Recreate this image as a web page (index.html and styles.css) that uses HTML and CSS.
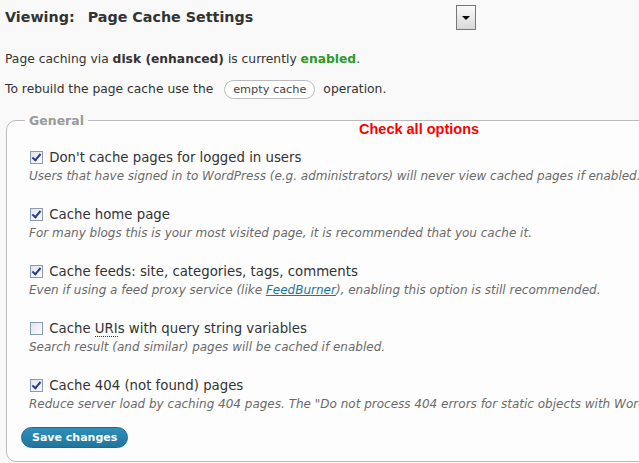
FILE: index.html
```html
<!DOCTYPE html>
<html lang="en">
<head>
  <meta charset="UTF-8">
  <title>Page Cache Settings</title>
  <link rel="stylesheet" href="styles.css">
</head>
<body>
  <div class="viewing">
    <h2>Viewing:<span class="sp"></span>Page Cache Settings</h2>
    <span class="picker"><span class="arrow"></span></span>
  </div>

  <p class="status">Page caching via <strong>disk (enhanced)</strong> is currently <strong class="on">enabled</strong>.</p>
  <p class="status">To rebuild the page cache use the <button class="pill">empty cache</button> operation.</p>

  <!-- Opciones generales -->
  <fieldset class="box">
    <legend>General</legend>
    <div class="note">Check all options</div>

    <div class="opt">
      <label><input type="checkbox" checked> Don't cache pages for logged in users</label>
      <span class="desc">Users that have signed in to WordPress (e.g. administrators) will never view cached pages if enabled.</span>
    </div>

    <div class="opt">
      <label><input type="checkbox" checked> Cache home page</label>
      <span class="desc">For many blogs this is your most visited page, it is recommended that you cache it.</span>
    </div>

    <div class="opt">
      <label><input type="checkbox" checked> Cache feeds: site, categories, tags, comments</label>
      <span class="desc">Even if using a feed proxy service (like <a href="#">FeedBurner</a>), enabling this option is still recommended.</span>
    </div>

    <div class="opt">
      <label><input type="checkbox"> Cache <abbr>URI</abbr>s with query string variables</label>
      <span class="desc">Search result (and similar) pages will be cached if enabled.</span>
    </div>

    <div class="opt">
      <label><input type="checkbox" checked> Cache 404 (not found) pages</label>
      <span class="desc">Reduce server load by caching 404 pages. The "Do not process 404 errors for static objects with WordPress" option is recommended.</span>
    </div>

    <button class="save">Save changes</button>
  </fieldset>
</body>
</html>
```

FILE: styles.css
```css
body {
  font-family: "DejaVu Sans", Verdana, sans-serif;
  font-size: 12.3px;
  color: #333;
  background: #f9f9f9;
  margin: 0;
  padding: 0 5px;
  overflow: hidden;
}

.viewing {
  display: flex;
  align-items: flex-start;
  height: 44px;
}

.viewing h2 {
  font-size: 14.3px;
  font-weight: bold;
  margin: 9px 0 0;
  width: 451px;
}

.viewing .sp {
  display: inline-block;
  width: 13px;
}

.picker {
  display: flex;
  align-items: center;
  justify-content: center;
  width: 18px;
  height: 23px;
  margin-top: 5px;
  border: 1px solid #777;
  background: linear-gradient(#fafafa, #d8d8d8);
}

.arrow {
  width: 0;
  height: 0;
  border-left: 4px solid transparent;
  border-right: 4px solid transparent;
  border-top: 4px solid #000;
}

.status {
  margin: 6px 0 12px;
  line-height: 18px;
}

.on {
  color: #2a9a2a;
}

.pill {
  font-family: inherit;
  font-size: 11.3px;
  color: #444;
  background: #fff;
  border: 1px solid #bbb;
  border-radius: 11px;
  padding: 2px 8px;
  margin: 0 4px 0 7px;
}

/* Caja de opciones */
.box {
  width: 700px;
  margin: 14px 0 0 1px;
  padding: 0 0 13px 14px;
  border: 1px solid #bbb;
  border-radius: 10px;
  background: #fdfdfd;
  position: relative;
}

.box legend {
  color: #999;
  font-weight: bold;
  font-size: 12.5px;
  padding: 0 4px;
  margin-left: 4px;
}

.note {
  position: absolute;
  left: 352px;
  top: -7px;
  font-family: "Liberation Sans", Arial, sans-serif;
  font-weight: bold;
  font-size: 14.5px;
  color: #f00;
}

.opt {
  display: flex;
  flex-direction: column;
  margin: 21px 0 0 8px;
}

.opt:first-of-type {
  margin-top: 17px;
}

.opt label {
  font-size: 13.3px;
  line-height: 18px;
}

.opt input {
  appearance: none;
  -webkit-appearance: none;
  position: relative;
  vertical-align: -2px;
  margin: 0 2px 0 1px;
  width: 13px;
  height: 13px;
  border: 1px solid #8c9bb0;
  background: linear-gradient(135deg, #dfe3ea, #fdfdfd);
}

.opt input:checked::before {
  content: "";
  position: absolute;
  left: 3px;
  top: 0;
  width: 3px;
  height: 7px;
  border-right: 2px solid #2a3c8c;
  border-bottom: 2px solid #2a3c8c;
  transform: rotate(40deg);
}

abbr {
  text-decoration: none;
  border-bottom: 1px dotted #333;
}

.desc {
  font-style: italic;
  font-size: 12px;
  color: #6a6a6a;
  white-space: nowrap;
  line-height: 18px;
}

.desc a {
  color: #21759b;
}

.save {
  display: block;
  margin-top: 14px;
  font-family: inherit;
  font-size: 11px;
  font-weight: bold;
  color: #fff;
  background: linear-gradient(#2e8fbb, #21759b);
  border: 1px solid #1e6a8d;
  border-radius: 11px;
  padding: 3px 10px;
}
```
